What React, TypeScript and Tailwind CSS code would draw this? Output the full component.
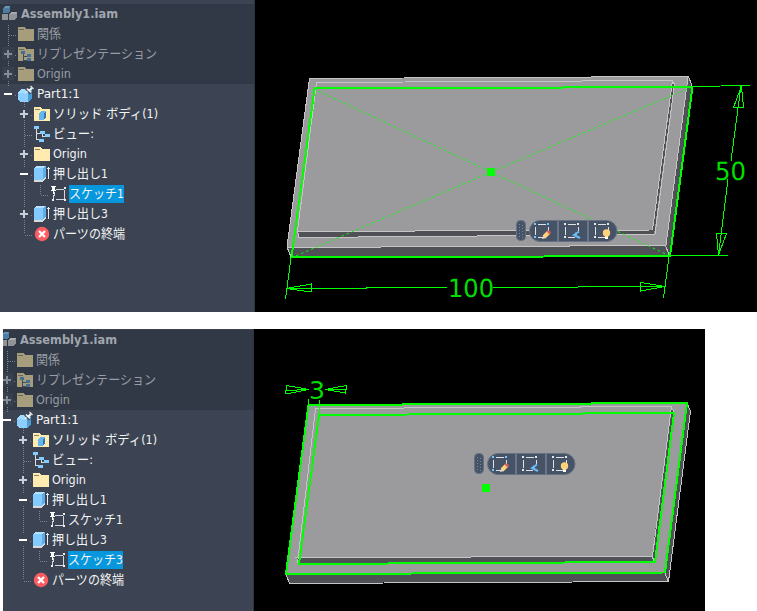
import React from "react";

type Kind = "assembly" | "folder" | "views" | "part" | "bodies" | "viewtree" | "extrude" | "sketch" | "end";
type Row = { depth: number; kind: Kind; label: string; toggle?: "+" | "-"; dim?: boolean; selected?: boolean };

const base: Row[] = [
  { depth: 0, kind: "assembly", label: "Assembly1.iam", dim: true },
  { depth: 1, kind: "folder", label: "関係", dim: true },
  { depth: 1, kind: "views", label: "リプレゼンテーション", toggle: "+", dim: true },
  { depth: 1, kind: "folder", label: "Origin", toggle: "+", dim: true },
  { depth: 1, kind: "part", label: "Part1:1", toggle: "-" },
  { depth: 2, kind: "bodies", label: "ソリッド ボディ(1)", toggle: "+" },
  { depth: 2, kind: "viewtree", label: "ビュー:" },
  { depth: 2, kind: "folder", label: "Origin", toggle: "+" },
  { depth: 2, kind: "extrude", label: "押し出し1", toggle: "-" },
];
const rowsTop: Row[] = [
  ...base,
  { depth: 3, kind: "sketch", label: "スケッチ1", selected: true },
  { depth: 2, kind: "extrude", label: "押し出し3", toggle: "+" },
  { depth: 2, kind: "end", label: "パーツの終端" },
];
const rowsBottom: Row[] = [
  ...base,
  { depth: 3, kind: "sketch", label: "スケッチ1" },
  { depth: 2, kind: "extrude", label: "押し出し3", toggle: "-" },
  { depth: 3, kind: "sketch", label: "スケッチ3", selected: true },
  { depth: 2, kind: "end", label: "パーツの終端" },
];

const widths: Record<string, number> = {
  "Assembly1.iam": 97, "関係": 24, "リプレゼンテーション": 120, "Origin": 34, "Part1:1": 43,
  "ソリッド ボディ(1)": 105, "ビュー:": 41, "押し出し1": 55, "押し出し3": 55,
  "スケッチ1": 55, "スケッチ3": 55, "パーツの終端": 72,
};

function Icon({ kind, dim }: { kind: Kind; dim?: boolean }) {
  const folder = dim ? "#a59d7b" : "#ffebb0";
  return (
    <svg width="18" height="18" viewBox="0 0 18 18" className="block shrink-0" shapeRendering={kind === "end" ? "auto" : "crispEdges"}>
      {kind === "assembly" && (
        <>
          <path d="M2 3l2-2h5v5l-2 2H2z" fill="#4c7ca0" />
          <path d="M2 3l2-2h5l-2 2z" fill="#6797b8" />
          <path d="M1 9h6v6H1zM8 9l2-2h6v5l-2 3H8z" fill="#8f9297" />
          <path d="M8 9l2-2h6l-2 2z" fill="#a8aaad" />
        </>
      )}
      {(kind === "folder" || kind === "views" || kind === "bodies") && (
        <>
          <path d="M0 2h6l2 2h8v12H0z" fill={folder} />
          <path d="M1 4.500h5" stroke={dim ? "#6b6858" : "#8a8468"} />
        </>
      )}
      {kind === "views" && (
        <>
          <path d="M5.500 9v6h5M6 11.500h3" stroke="#424c59" fill="none" />
          <path d="M3 6h4v3H3zM9 9h4v3H9zM9 13h4v3H9z" fill="#416f98" />
        </>
      )}
      {kind === "bodies" && (
        <>
          <path d="M5 8l2-2h5v6l-2 3H5z" fill="#469bd5" />
          <path d="M5 8l2-2h5l-2 2zM5 8h5v7H5z" fill="#64b7ee" />
          <path d="M10 8l2-2v6l-2 3z" fill="#3078ae" />
        </>
      )}
      {kind === "part" && (
        <>
          <path d="M0 7l4-3h10v9l-4 4H2l-2-2z" fill="#8bceff" />
          <path d="M10 8l4-4v9l-4 4z" fill="#4b9cd4" />
          <path d="M0 7l4-3h10l-4 4H0z" fill="#a4dcff" />
          <g shapeRendering="auto">
            <path d="M8 3.500l5 5" stroke="#3c4453" strokeWidth="2.500" />
            <path d="M7 8.500l3-3" stroke="#f5f5f5" />
            <path d="M9 3.500l4 4M11 5.500l3-3" stroke="#f5f5f5" strokeWidth="1.700" />
            <path d="M12.500 1l3 3" stroke="#ddd" strokeWidth="1.500" />
          </g>
        </>
      )}
      {kind === "viewtree" && (
        <>
          <path d="M2.500 4v10h5M3 8.500h5M8.500 7v4h3" stroke="#ddd" fill="none" />
          <path d="M0 1h5v3H0zM6 6h5v3H6zM11 9h5v3h-5zM5 14h5v3H5z" fill="#83ccff" />
        </>
      )}
      {kind === "extrude" && (
        <>
          <path d="M0 14h8l4-4v3l-4 4H0z" fill="#d7d9dc" />
          <path d="M0 3l3-2h9v10l-4 4H0z" fill="#83caff" />
          <path d="M0 3l3-2h9l-3 2z" fill="#b5e3ff" />
          <path d="M9 3l3-2v10l-3 4z" fill="#5aaeea" />
          <path d="M14.500 2v12M13 3.500h3" stroke="#eee" />
        </>
      )}
      {kind === "sketch" && (
        <>
          <path d="M6 4.500h8M14.500 5v9M6 14.500h8M5 7l-2 7" stroke="#d5d7da" fill="none" />
          <path d="M14 2h2v2h-2zM14 14h2v2h-2zM2 14h2v2H2z" fill="#eee" />
          <path d="M1 1h5v1H5v3h1v1H1V5h1V2H1zM3 6h1v3H3z" fill="#fff" />
        </>
      )}
      {kind === "end" && (
        <>
          <circle cx="8" cy="9" r="7.200" fill="#ff5c61" />
          <path d="M5 6l6 6M11 6l-6 6" stroke="#fff" strokeWidth="2.300" />
        </>
      )}
    </svg>
  );
}

function Label({ row }: { row: Row }) {
  const w = widths[row.label];
  const color = row.dim ? (row.depth === 0 ? "#a0a6ae" : "#989da5") : "#f3f4f5";
  return (
    <span className={"block h-[18px] shrink-0 " + (row.selected ? "bg-[#0797dc]" : "")}>
      <svg width={w} height="18" className="block overflow-visible">
        <text
          x="0" y="13" textLength={w} lengthAdjust="spacingAndGlyphs" fill={color}
          className={row.depth === 0
            ? "font-['DejaVu_Sans_Condensed','DejaVu_Sans',sans-serif] text-[13px] font-bold"
            : "font-['DejaVu_Sans_Condensed','Noto_Sans_CJK_JP',sans-serif] text-[13px]"}
        >
          {row.label}
        </text>
      </svg>
    </span>
  );
}

function Toggle({ row }: { row: Row }) {
  return (
    <svg width="13" height="13" className="-mt-px block shrink-0" shapeRendering="crispEdges">
      {row.toggle && <rect width="12" height="13" fill={row.dim ? "#38404e" : "#3c4453"} />}
      {row.toggle === "+" && <path d="M2 7h8M6 3v8" stroke={row.dim ? "#858c97" : "#c8d0da"} strokeWidth="2" />}
      {row.toggle === "-" && <path d="M2 7h8" stroke="#fff" strokeWidth="2" />}
    </svg>
  );
}

function Tree({ rows }: { rows: Row[] }) {
  const last = rows.length * 20 - 6;
  return (
    <div className="relative h-full w-[255px] shrink-0 bg-[#3c4453] pt-1">
      <div className="absolute inset-x-0 top-1 h-20 bg-[#323946]" />
      <svg width="255" height="312" className="absolute left-0 top-0" shapeRendering="crispEdges" stroke="#7d838d" strokeDasharray="1 1" fill="none">
        <path d="M8.500 25V90" />
        <path d={"M24.500 102V" + last} />
        {rows.map((r, i) => {
          const y = 14.5 + i * 20;
          const x = r.depth * 16 - 8;
          return (
            <g key={i}>
              {r.depth > 0 && <path d={`M${x + 1} ${y + 1}H${x + 9}`} />}
              {r.depth === 3 && <path d={`M40.500 ${y - 10}V${y}`} />}
            </g>
          );
        })}
      </svg>
      <div className="absolute inset-y-0 right-0 w-px bg-[#2b343f]" />
      <div className="relative flex flex-col">
        {rows.map((r, i) => (
          <div key={i} className="flex h-5 items-center">
            {r.depth > 0 && (
              <div className={r.depth === 1 ? "flex w-[18px] pl-0.5" : r.depth === 2 ? "flex w-[34px] pl-[18px]" : "flex w-[50px] pl-[34px]"}>
                <Toggle row={r} />
              </div>
            )}
            {r.depth === 0 && <div className="w-px" />}
            <Icon kind={r.kind} dim={r.dim} />
            <div className={r.depth === 0 ? "w-0.5" : "w-px"} />
            <Label row={r} />
          </div>
        ))}
      </div>
    </div>
  );
}

function Toolbar() {
  return (
    <svg width="104" height="24" className="block">
      <rect x="0.500" y="1.500" width="9" height="20" rx="4" fill="#465266" stroke="#667184" />
      <path d="M3.500 5v14M6.500 6v13" stroke="#79859a" strokeDasharray="1 2" />
      <rect x="13.500" y="1.500" width="87.500" height="21" rx="10.500" fill="#465266" stroke="#667184" />
      <path d="M42 1v22M72 1v22" stroke="#697589" strokeWidth="2" />
      {[0, 30, 60].map((x, i) => {
        const c = i === 0 ? "#73c6ff" : "#e7e8ea";
        return (
          <g key={x} transform={`translate(${x} 1)`} shapeRendering="crispEdges">
            <path d="M22 4.500h8M19.500 7v8M22 17.500h7M32.500 7v4" stroke="#dfe1e5" />
            <path d="M18 3h2v2h-2zM31 3h2v2h-2zM18 16h2v2h-2z" fill={c} />
          </g>
        );
      })}
      <path d="M28 18l5-5" stroke="#ffd27a" strokeWidth="4" />
      <path d="M30.500 12.500l3 3 1.500-2.500-2.500-1.500z" fill="#df5863" />
      <path d="M26 20l1-3 3 2z" fill="#e3dfda" />
      <path d="M63 12.500l-5 3.500 6 3M60 13.500v4" stroke="#6bbcf5" strokeWidth="2" fill="none" />
      <path d="M89 17h3v3h-3z" fill="#fff" />
      <circle cx="90.500" cy="14" r="3.700" fill="#ffd27a" />
    </svg>
  );
}

const numCls = "font-['DejaVu_Sans_Condensed','DejaVu_Sans',sans-serif] text-[25px]";

function TopModel() {
  return (
    <svg width="502" height="312" viewBox="255 0 502 312" className="block" shapeRendering="crispEdges" fill="none">
      <path d="M309 78L688 76L692 86L670 256L291 258L287 247z" fill="#505156" />
      <path d="M309 78L688 76L666 245L287 247z" fill="#9b9b9d" />
      <path d="M672 81L674 84L654 235L299 238L297 231L652 230z" fill="#505156" />
      <path d="M316 82L672 80L652 230L297 231z" fill="#9b9b9d" />
      <g stroke="#c5c5c6">
        <path d="M291 257L287 247L309.500 78.500L688.500 76.500L692 86M287 247.500L665.500 245.500L669 255M666 245L688 77" />
        <path d="M297.500 231L316.500 82.500L672.500 80.500L652.500 230L297 231.500M672 81L674.500 84L655 234.500L299 237.500L297.500 231" />
      </g>
      <g stroke="#00ff00">
        <path d="M314.500 89L291.500 257.500L670 256L692.500 87L314 88.500" strokeWidth="2" />
        <path d="M314 89L491 172M670 256L491 172M291 258L491 172M692 87L491 172" strokeDasharray="2.500 3" shapeRendering="geometricPrecision" />
        <path d="M692 86.500L750 85.500M670 255.500H728M291 258L285.500 299M669 257L663.500 298" />
        <path d="M286 288.500L447 287.500M493 287.500L665 286.500M741 86L731 161M728 179L718.500 255" />
        <path d="M286 288.500L311.500 284V292zM665 286.500L640.500 282.500V291zM741.500 86L733.500 107.500H743.500zM718.500 255L716.500 233.500H726.500z" />
      </g>
      <path d="M487 168h8v8h-8z" fill="#00ff00" />
      <g fill="#00df00" textRendering="geometricPrecision">
        <text x="448" y="297" textLength="46" lengthAdjust="spacingAndGlyphs" className={numCls}>100</text>
        <text x="715" y="180" textLength="31" lengthAdjust="spacingAndGlyphs" className={numCls}>50</text>
      </g>
    </svg>
  );
}

function BottomModel() {
  return (
    <svg width="451" height="282" viewBox="254 329 451 282" className="block" shapeRendering="crispEdges" fill="none">
      <path d="M308 404L687 402L691 411L669 581L289 583L286 573z" fill="#505156" />
      <path d="M308 404L687 403L665 572L286 574z" fill="#9b9b9d" />
      <path d="M671 407L674 412L655 562L299 564L297 557L652 556z" fill="#505156" />
      <path d="M315 408L671 406L652 556L297 557z" fill="#9b9b9d" />
      <g stroke="#c5c5c6">
        <path d="M286 574L289.500 583.500L668.500 581.500L690.500 411L687 403M668 581L665 573" />
        <path d="M297.500 563L315.500 408.500L671.500 406.500L652.500 556.500L295 557.500M671 407L674 412M652 556L654 561" />
      </g>
      <g stroke="#00ff00" strokeWidth="2">
        <path d="M308.500 405L687 403L665 572.500L286 574z" />
        <path d="M319 415L674 413L655 562L299 564z" />
      </g>
      <g stroke="#00ff00">
        <path d="M308.500 399V405M319.500 400V415M285 390.500L309 389.500M325 389.500L347 389.500" />
        <path d="M309 389.500L286.500 385.500L285.500 394zM325 389.500L346.500 385.500L345.500 393z" />
      </g>
      <path d="M482 484h8v8h-8z" fill="#00ff00" />
      <text x="309" y="399" textLength="16" lengthAdjust="spacingAndGlyphs" fill="#00df00" className={numCls}>3</text>
    </svg>
  );
}

export default function App() {
  return (
    <main className="flex h-[611px] w-[757px] flex-col gap-[17px] overflow-hidden bg-white">
      <section className="flex h-[312px] w-full shrink-0 overflow-hidden bg-black">
        <Tree rows={rowsTop} />
        <div className="relative">
          <TopModel />
          <div className="absolute left-[261px] top-[219px]"><Toolbar /></div>
        </div>
      </section>
      <section className="ml-[3px] flex h-[282px] w-[702px] shrink-0 overflow-hidden bg-black">
        <div className="-mt-[3px] -ml-1 h-[285px] shrink-0"><Tree rows={rowsBottom} /></div>
        <div className="relative">
          <BottomModel />
          <div className="absolute left-[220px] top-[123px]"><Toolbar /></div>
        </div>
      </section>
    </main>
  );
}
